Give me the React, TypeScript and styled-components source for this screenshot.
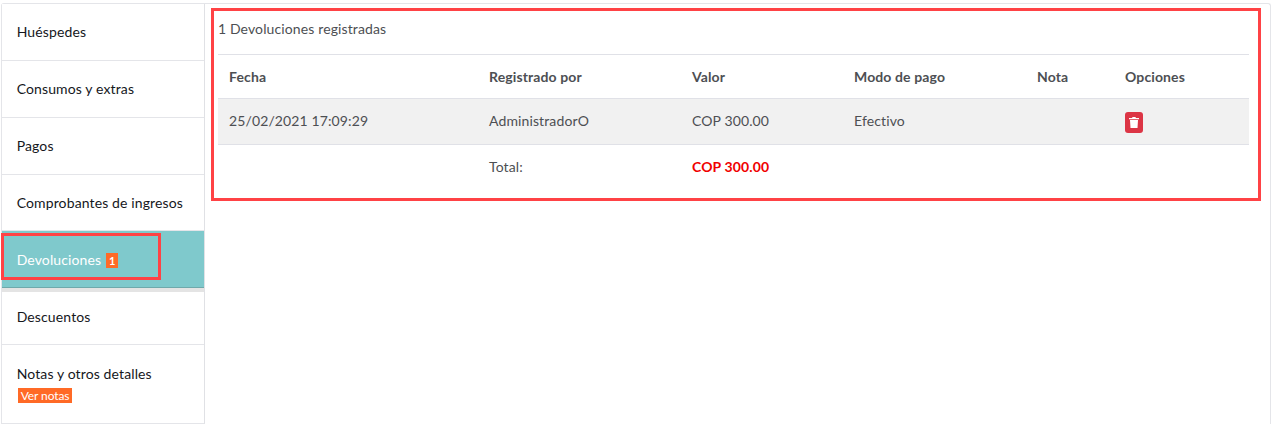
import React from "react";
import styled, { createGlobalStyle } from "styled-components";

const GlobalStyle = createGlobalStyle`
  html, body {
    margin: 0;
    padding: 0;
    background: #fff;
    font-family: Lato, "Liberation Sans", sans-serif;
    font-size: 14px;
    letter-spacing: 0.12px;
    overflow: hidden;
  }
`;

const Page = styled.div`
  height: 424px;
  padding: 3px 2px 0 1px;
  box-sizing: border-box;
`;

const Card = styled.div`
  display: flex;
  width: 1270px;
  height: 421px;
  box-sizing: border-box;
  border: 1px solid #e4e5e9;
  border-bottom: 0;
  border-radius: 3px 3px 0 0;
  background: #fff;
`;

const Sidebar = styled.ul`
  position: relative;
  flex: none;
  width: 203px;
  height: 420px;
  margin: 0;
  padding: 0;
  list-style: none;
  box-sizing: border-box;
  border-right: 1px solid #e0e1e5;
  border-bottom: 1px solid #e4e5e9;
`;

const MenuItem = styled.li<{ $active?: boolean; $tall?: boolean; $height?: number; $lift?: number }>`
  display: flex;
  flex-direction: column;
  justify-content: center;
  align-items: flex-start;
  box-sizing: border-box;
  height: ${(p) => p.$height ?? 57}px;
  padding: 0 15px ${(p) => p.$lift ?? 0}px 14.7px;
  color: ${(p) => (p.$active ? "#fff" : "#15171c")};
  background: ${(p) => (p.$active ? "#7fc9cc" : "#fff")};
  border-bottom: ${(p) =>
    p.$active ? "4px solid #e4e4e4" : p.$tall ? "none" : "1px solid #e4e5e9"};
  box-shadow: ${(p) => (p.$active ? "inset 0 -1px 0 #6fa9ab" : "none")};
  line-height: 20px;
`;

const MenuLabel = styled.span`
  display: inline-flex;
  align-items: center;
  gap: 5px;
  white-space: nowrap;
`;

const CountBadge = styled.span`
  display: inline-block;
  width: 12px;
  height: 15px;
  margin-top: 1px;
  background: #ff6a26;
  color: #fff;
  font-size: 11px;
  font-weight: 700;
  line-height: 15px;
  text-align: center;
`;

const NotesBadge = styled.span`
  display: inline-block;
  height: 15px;
  margin: 4px 0 0 1px;
  padding: 0 3px;
  background: #ff6a26;
  color: #fff;
  font-size: 12px;
  letter-spacing: -0.1px;
  line-height: 15px;
`;

const Content = styled.section`
  position: relative;
  flex: 1;
  padding: 0 20px 0 13px;
  color: #4d4f53;
`;

const Title = styled.div`
  height: 50px;
  padding-top: 15px;
  box-sizing: border-box;
  line-height: 20px;
`;

const Table = styled.table`
  width: 1031px;
  border-collapse: collapse;
  table-layout: fixed;
`;

const HeadCell = styled.th`
  height: 44px;
  padding: 0 11px;
  box-sizing: border-box;
  border-top: 1px solid #e0e1e7;
  border-bottom: 1px solid #e0e1e7;
  font-weight: 700;
  text-align: left;
`;

const BodyRow = styled.tr`
  background: #f1f1f1;
`;

const BodyCell = styled.td`
  height: 46px;
  padding: 0 11px 2px;
  box-sizing: border-box;
  border-bottom: 1px solid #e0e1e7;
`;

const TotalCell = styled.td`
  height: 46px;
  padding: 0 11px 2px;
  box-sizing: border-box;
`;

const TotalValue = styled(TotalCell)`
  color: #f00000;
  font-weight: 700;
`;

const DeleteButton = styled.button`
  display: flex;
  align-items: center;
  justify-content: center;
  width: 18px;
  height: 21px;
  margin-top: 3px;
  padding: 0;
  border: 0;
  border-radius: 3px;
  background: #dc3545;
`;

const Highlight = styled.div`
  position: absolute;
  box-sizing: border-box;
  border: 3px solid #ff4245;
  pointer-events: none;
`;

const ContentHighlight = styled(Highlight)`
  left: 6px;
  top: 4px;
  width: 1050px;
  height: 193px;
`;

const TabHighlight = styled(Highlight)`
  left: -1px;
  top: 229px;
  width: 160px;
  height: 47px;
`;

const columns = [
  { label: "Fecha", width: 260 },
  { label: "Registrado por", width: 203 },
  { label: "Valor", width: 162 },
  { label: "Modo de pago", width: 183 },
  { label: "Nota", width: 88 },
  { label: "Opciones", width: 135 },
];

const TrashIcon = () => (
  <svg width="10" height="11" viewBox="0 0 10 11" aria-hidden="true">
    <path fill="#fff" d="M3.5 0h3l.4 1H10v1.2H0V1h3.1zM1 3h8l-.5 8h-7z" />
  </svg>
);

const App = () => (
  <Page>
    <GlobalStyle />
    <Card>
      <Sidebar>
        <MenuItem>Huéspedes</MenuItem>
        <MenuItem>Consumos y extras</MenuItem>
        <MenuItem>Pagos</MenuItem>
        <MenuItem $height={56}>Comprobantes de ingresos</MenuItem>
        <MenuItem $active $height={61}>
          <MenuLabel>
            Devoluciones <CountBadge>1</CountBadge>
          </MenuLabel>
        </MenuItem>
        <MenuItem $height={53} $lift={2}>Descuentos</MenuItem>
        <MenuItem $tall $height={78} $lift={2}>
          Notas y otros detalles
          <NotesBadge>Ver notas</NotesBadge>
        </MenuItem>
        <TabHighlight />
      </Sidebar>
      <Content>
        <Title>1 Devoluciones registradas</Title>
        <Table>
          <colgroup>
            {columns.map((c) => (
              <col key={c.label} width={c.width} />
            ))}
          </colgroup>
          <thead>
            <tr>
              {columns.map((c) => (
                <HeadCell key={c.label}>{c.label}</HeadCell>
              ))}
            </tr>
          </thead>
          <tbody>
            <BodyRow>
              <BodyCell>25/02/2021 17:09:29</BodyCell>
              <BodyCell>AdministradorO</BodyCell>
              <BodyCell>COP 300.00</BodyCell>
              <BodyCell>Efectivo</BodyCell>
              <BodyCell />
              <BodyCell>
                <DeleteButton aria-label="Eliminar">
                  <TrashIcon />
                </DeleteButton>
              </BodyCell>
            </BodyRow>
            <tr>
              <TotalCell />
              <TotalCell>Total:</TotalCell>
              <TotalValue>COP 300.00</TotalValue>
              <TotalCell />
              <TotalCell />
              <TotalCell />
            </tr>
          </tbody>
        </Table>
        <ContentHighlight />
      </Content>
    </Card>
  </Page>
);

export default App;
